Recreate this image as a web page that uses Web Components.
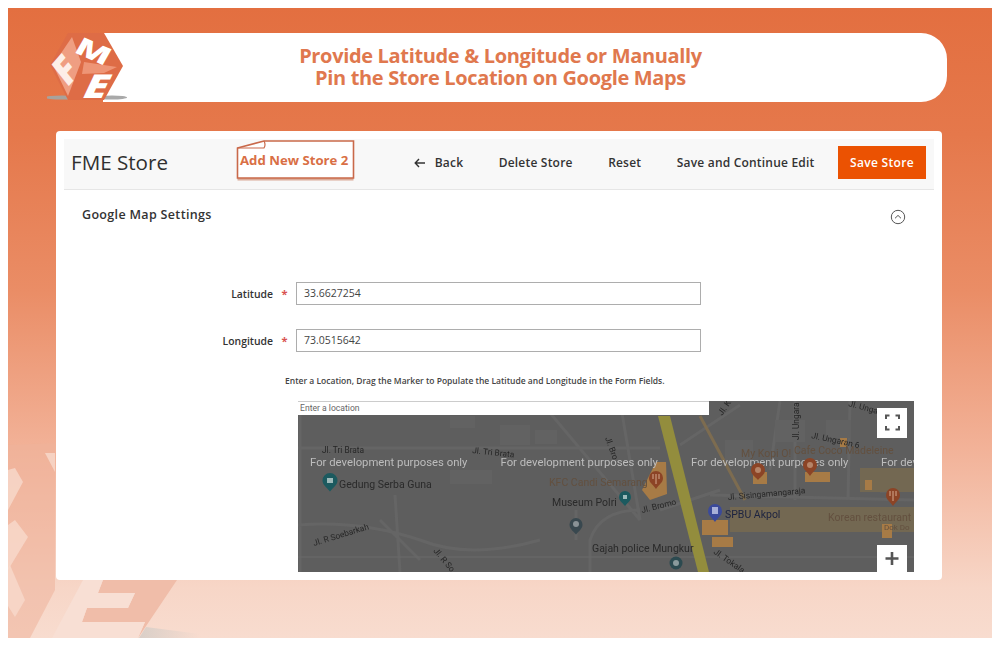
<!DOCTYPE html>
<html lang="en">
<head>
<meta charset="UTF-8">
<title>FME Store Locator</title>
<style>
    body { margin: 8px; background: #fff; font-family: "Open Sans", sans-serif; }
</style>
</head>
<body>
<template id="tmpl-slide">
    <style>
        :host { display: block; position: relative; width: 984px; height: 630px; overflow: hidden;
            background: linear-gradient(180deg, #e36f40 0%, #e5784b 20%, #ea8d66 45%, #f2b298 70%, #f7d6c7 92%, #f8dccf 100%); }
        #mark { position: absolute; left: 0; top: 0; }
        #content { position: relative; display: flex; flex-direction: column; padding-top: 25px; }
    </style>
    <svg id="mark" width="984" height="630" viewBox="8 8 984 630">
        <defs>
            <linearGradient id="shade" x1="0" x2="1" y1="0" y2="0"><stop offset="0" stop-color="#d9cfc8"/><stop offset="1" stop-color="#d9cfc8" stop-opacity="0"/></linearGradient>
        </defs>
        <polygon points="8,445 55,443 55,590 30,638 8,638" fill="#efb29a" opacity=".55"/>
        <polygon points="8,470 15,468 23,482 8,510" fill="#f8d9cc" opacity=".8"/>
        <polygon points="8,525 15,520 28,537 8,570" fill="#f8d9cc" opacity=".8"/>
        <polygon points="8,568 10,565 25,600 15,617 8,606" fill="#f8d9cc" opacity=".8"/>
        <polygon points="45,453 55,453 55,472" fill="#f8d9cc" opacity=".8"/>
        <polygon points="103,580 177,580 138,638 145,622 82,622 87,608 128,608 135,593 98,593" fill="#f0bda9"/>
        <polygon points="83,580 103,580 98,593 135,593 128,608 87,608 82,622 145,622 138,638 52,638" fill="#f8dfd4"/>
        <polygon points="146,627 200,634 200,638 139,638" fill="url(#shade)"/>
    </svg>
    <div id="content"><slot></slot></div>
</template>

<template id="tmpl-banner">
    <style>
        :host { display: block; position: relative; height: 69px; margin: 0 45px 29px 95px; background: #fff; border-radius: 0 26px 26px 0; }
        #logo { position: absolute; left: -56px; top: -2px; }
        #title { display: flex; flex-direction: column; align-items: center; padding: 12px 49px 0 0;
            font: 700 20px/22px "Open Sans", sans-serif; letter-spacing: -.34px; color: #e0784e; white-space: nowrap; }
    </style>
    <svg id="logo" width="85" height="74" viewBox="47 31 85 74">
        <ellipse cx="62" cy="97.500" rx="17" ry="2" fill="#a8a29c"/>
        <ellipse cx="112" cy="97.500" rx="15" ry="2" fill="#a9a9a9"/>
        <polygon points="68,33 104,33 123,66 104,100 68,100 50,65" fill="#de6c46"/>
        <polygon points="72,37 81,62 68,96 53,65" fill="#ef9e82"/>
        <polygon points="84,62 117,67 104,73 82,74" fill="#ee9576"/>
        <text transform="matrix(.8 -.9 .8 1 67 88)" font-family="Open Sans" font-weight="800" font-size="30" fill="#fdeee7">F</text>
        <text transform="matrix(1.15 .5 -.43 .75 73 52)" font-family="Open Sans" font-weight="800" font-size="29" fill="#fff">M</text>
        <text transform="matrix(1.3 0 -.47 1 80 98)" font-family="Open Sans" font-weight="800" font-size="33" fill="#fff">E</text>
    </svg>
    <div id="title"><slot></slot></div>
</template>

<template id="tmpl-card">
    <style>
        :host { display: flex; flex-direction: column; height: 433px; margin: 0 50px 0 48px; padding: 8px; background: #fff; border-radius: 4px; }
    </style>
    <slot></slot>
</template>

<template id="tmpl-toolbar">
    <style>
        :host { display: flex; align-items: center; height: 50px; padding: 0 8px 0 7px; background: #f8f8f8; border-bottom: 1px solid #e6e6e6; color: #303030; flex: none; }
        #name { font: 400 20.6px/26px "Open Sans", sans-serif; width: 165px; margin-top: -5px; }
        #actions { display: flex; align-items: center; gap: 35.5px; margin-left: auto; margin-top: -3px; }
    </style>
    <div id="name"><slot name="title"></slot></div>
    <slot name="note"></slot>
    <div id="actions"><slot></slot></div>
</template>

<template id="tmpl-note">
    <style>
        :host { display: block; position: relative; width: 119px; height: 43px; margin-top: -7px; }
        svg { position: absolute; left: 0; top: 0; }
        span { position: absolute; left: 4px; top: 12px; font: 700 13.2px/18px "Open Sans", sans-serif; color: #d96f45; white-space: nowrap; }
    </style>
    <svg width="119" height="43" viewBox="235 139 119 43">
        <polygon points="236.500,149 264,141 352.500,141 352.500,179 236.500,179" fill="#c97a5c" transform="translate(0 1.5)" opacity=".6"/>
        <path d="M236.500 148 L263 141 L352.500 141 L352.500 178 L236.500 178 Z" fill="#fff" stroke="#c9694a" stroke-width="1.6"/>
        <path d="M236.500 148 L263 148 Q265 145 263 141" fill="none" stroke="#c9694a" stroke-width="1.2"/>
    </svg>
    <span><slot></slot></span>
</template>

<template id="tmpl-action">
    <style>
        :host { display: inline-flex; align-items: center; gap: 10px; font: 600 12px/16px "Open Sans", sans-serif; letter-spacing: .2px; color: #333; white-space: nowrap; }
        :host([primary]) { box-sizing: border-box; width: 88px; height: 33px; justify-content: center; background: #eb5202; color: #fff; margin-left: -12px; font-weight: 600; letter-spacing: .3px; }
        svg { display: none; }
        :host([back]) svg { display: block; }
    </style>
    <svg width="11" height="10" viewBox="0 0 11 10"><path d="M11 5H1.5M5 1 1.2 5 5 9" fill="none" stroke="#333" stroke-width="1.4"/></svg>
    <span><slot></slot></span>
</template>

<template id="tmpl-section">
    <style>
        :host { display: flex; align-items: center; justify-content: space-between; padding: 11px 28px 0 18px; height: 30px; font: 600 12.5px/18px "Open Sans", sans-serif; letter-spacing: .33px; color: #333; flex: none; }
        div { margin-top: -3px; }
        svg { margin-top: 1px; }
    </style>
    <div><slot></slot></div>
    <svg width="16" height="16" viewBox="0 0 16 16"><circle cx="8" cy="8" r="6.7" fill="none" stroke="#555" stroke-width="1"/><path d="M5 9.300 8 6.400l3 2.900" fill="none" stroke="#555" stroke-width="1"/></svg>
</template>

<template id="tmpl-field">
    <style>
        :host { display: grid; grid-template-columns: 209px 23px 405px; align-items: center; height: 23px; margin-bottom: 24px; font: 600 10.4px/14px "Open Sans", sans-serif; color: #333; flex: none; }
        label { text-align: right; }
        i { font: 700 11px/14px "Open Sans", sans-serif; color: #d9534f; text-align: center; }
        #box { box-sizing: border-box; height: 23px; padding: 0 7px; border: 1px solid #adadad; background: #fff; font: 400 10.5px/20px "Open Sans", sans-serif; color: #444; }
    </style>
    <label><slot name="label"></slot></label><i>*</i>
    <div id="box"><slot></slot></div>
</template>

<template id="tmpl-map">
    <style>
        :host { display: block; position: relative; width: 616px; height: 171px; margin-left: 234px; flex: none; overflow: hidden; }
        svg { display: block; filter: blur(.45px); }
        text { font-family: Roboto, sans-serif; }
        .st { font-size: 8.4px; fill: #262626; }
        .pl { font-size: 10.5px; fill: #2a2a2a; }
        .or { font-size: 10.5px; fill: #63503f; }
        .wm { font-size: 11.3px; fill: #bdbdbd; }
    </style>
    <svg width="616" height="171" viewBox="298 401 616 171">
        <rect x="298" y="401" width="616" height="171" fill="#5e5e5e"/>
        <g fill="none" stroke="#656565" stroke-width="3">
            <path d="M298 448H660M300 401V572M380 520 L420 560M395 495 L400 572M298 525 Q360 520 420 540 Q470 560 540 540"/>
            <path d="M540 401 L640 520M620 401 L640 520M576 540V510M640 510 Q600 510 590 540 L590 572"/>
            <path d="M780 401 L770 470M795 401V500M850 401 L848 500M710 495 L914 500M660 510 L720 490M680 445 L740 405"/>
        </g>
        <path d="M298 557H914" stroke="#6a6a6a" stroke-width="1"/>
        <path d="M700 416 L745 500" stroke="#7d6c50" stroke-width="3" fill="none"/>
        <g fill="#626262">
            <rect x="450" y="416" width="25" height="12"/><rect x="500" y="425" width="30" height="20"/><rect x="535" y="430" width="22" height="14"/>
            <rect x="450" y="470" width="42" height="14"/><rect x="725" y="440" width="28" height="22"/><rect x="775" y="420" width="30" height="22"/>
            <rect x="826" y="420" width="25" height="18"/><rect x="880" y="478" width="12" height="15"/>
        </g>
        <g fill="#736852">
            <rect x="730" y="507" width="184" height="25"/><rect x="860" y="468" width="54" height="24"/>
        </g>
        <g fill="#a77b46">
            <polygon points="656,462 666,462 667,494 650,500 642,490"/>
            <rect x="702" y="520" width="26" height="15"/><rect x="712" y="537" width="21" height="10"/>
            <rect x="753" y="472" width="14" height="12"/><rect x="805" y="472" width="25" height="10"/>
            <rect x="865" y="480" width="7" height="10"/><rect x="840" y="438" width="7" height="9"/>
            <rect x="882" y="524" width="10" height="14"/>
        </g>
        <polygon points="658,416 670,416 709,572 698,572" fill="#938d3d"/>

        <text class="st" x="322" y="453">Jl. Tri Brata</text>
        <text class="st" transform="translate(472 453) rotate(6)">Jl. Tri Brata</text>
        <text class="st" transform="translate(314 546) rotate(-17)">Jl. R Soebarkah</text>
        <text class="st" transform="translate(433 551) rotate(50)">Jl. R So</text>
        <text class="st" transform="translate(605 438) rotate(70)">Jl. Bro</text>
        <text class="st" transform="translate(722 416) rotate(-55)">Jl. K</text>
        <text class="st" transform="translate(799 440) rotate(-90)">Jl. Ungara</text>
        <text class="st" transform="translate(848 406) rotate(15)">Jl. Ungar</text>
        <text class="st" transform="translate(811 438) rotate(12)">Jl. Ungaran 6</text>
        <text class="st" transform="translate(728 500) rotate(-5)">Jl. Sisingamangaraja</text>
        <text class="st" transform="translate(642 513) rotate(-14)">Jl. Bromo</text>
        <text class="st" transform="translate(713 553) rotate(35)">Jl. Tokala</text>

        <text class="pl" x="339" y="488">Gedung Serba Guna</text>
        <text class="or" x="549" y="486">KFC Candi Semarang</text>
        <text class="pl" x="552" y="506">Museum Polri</text>
        <text class="pl" x="592" y="552">Gajah police Mungkur</text>
        <text class="or" x="741" y="457">My Kopi O!</text>
        <text class="or" x="794" y="454">Cafe Coco Madeleine</text>
        <text class="pl" x="725" y="518" style="fill:#1c2340">SPBU Akpol</text>
        <text class="or" x="828" y="521">Korean restaurant</text>
        <text class="or" x="884" y="530" style="font-size:8px">Dok Do</text>

        <text class="wm" x="310" y="466">For development purposes only</text>
        <text class="wm" x="500.500" y="466">For development purposes only</text>
        <text class="wm" x="691" y="466">For development purposes only</text>
        <text class="wm" x="881" y="466">For development purposes only</text>

        <g id="pins">
            <path d="M330 473a7.500 7.500 0 0 1 7.500 7.500c0 4.500-4 6.500-7.500 11-3.500-4.500-7.500-6.500-7.500-11a7.500 7.500 0 0 1 7.500-7.500z" fill="#1c5a5f"/><rect x="327" y="478" width="6" height="5" fill="#9db9b9"/>
            <path d="M625 491a6 6 0 0 1 6 6c0 4-3 5-6 9-3-4-6-5-6-9a6 6 0 0 1 6-6z" fill="#1c5a5f"/><rect x="623" y="495" width="4" height="4" fill="#9db9b9"/>
            <path d="M576 518a6.500 6.500 0 0 1 6.500 6.500c0 4-3 6-6.500 10-3.500-4-6.500-6-6.500-10a6.500 6.500 0 0 1 6.500-6.500z" fill="#39484f"/><circle cx="576" cy="524" r="3" fill="#8a9296"/>
            <path d="M656 471a7 7 0 0 1 7 7c0 4.500-3.500 6-7 11-3.500-5-7-6.500-7-11a7 7 0 0 1 7-7z" fill="#8c4426"/><path d="M653 474v5M656 474v10M659 474v5" stroke="#d5a98f" stroke-width="1"/>
            <path d="M758 463a7 7 0 0 1 7 7c0 4.500-3.500 6-7 10-3.500-4-7-5.500-7-10a7 7 0 0 1 7-7z" fill="#8c4426"/><circle cx="758" cy="470" r="3" fill="#b58468"/>
            <path d="M810 458a7 7 0 0 1 7 7c0 4.500-3.500 6-7 11-3.500-5-7-6.500-7-11a7 7 0 0 1 7-7z" fill="#8c4426"/><circle cx="810" cy="465" r="3" fill="#b58468"/>
            <path d="M893 488a7 7 0 0 1 7 7c0 4.500-3.500 6-7 11-3.500-5-7-6.500-7-11a7 7 0 0 1 7-7z" fill="#8c4426"/><path d="M890 491v5M893 491v10M896 491v5" stroke="#d5a98f" stroke-width="1"/>
            <path d="M715 504a7 7 0 0 1 7 7c0 4.500-3.500 6-7 11-3.500-5-7-6.500-7-11a7 7 0 0 1 7-7z" fill="#3b4a9a"/><rect x="712" y="507" width="6" height="7" fill="#a8b0d8"/>
            <circle cx="676" cy="563" r="6.500" fill="#2c4a50"/><circle cx="676" cy="563" r="3" fill="#8a9a9c"/>
        </g>

        <rect x="877" y="408" width="30" height="30" fill="#fff"/>
        <path d="M886 419v-3.500h3.500M895.500 415.500h3.500v3.500M899 426v3.500h-3.500M889.500 429.500H886V426" fill="none" stroke="#555" stroke-width="2"/>
        <rect x="877" y="545" width="30" height="27" fill="#fff"/>
        <path d="M892 552v13M885.500 558.500h13" stroke="#555" stroke-width="2.600"/>
    </svg>
    <input-strip><slot></slot></input-strip>
</template>

<template id="tmpl-strip">
    <style>
        :host { display: block; position: absolute; left: 0; top: 0; box-sizing: border-box; width: 411px; height: 14px; padding: 0 2px; background: #fff; border-top: 1px solid #ccc; font: 400 8.6px/13px Roboto, sans-serif; color: #666; }
    </style>
    <slot></slot>
</template>

<template id="tmpl-hint">
    <style>
        :host { display: block; margin: -2px 0 13px 221px; height: 14px; font: 600 8.5px/14px "Open Sans", sans-serif; color: #444; white-space: nowrap; flex: none; }
    </style>
    <slot></slot>
</template>

<fme-slide>
    <fme-banner>
        <span>Provide Latitude &amp; Longitude or Manually</span>
        <span>Pin the Store Location on Google Maps</span>
    </fme-banner>
    <store-card>
        <store-toolbar>
            <span slot="title">FME Store</span>
            <store-note slot="note">Add New Store 2</store-note>
            <store-action back>Back</store-action>
            <store-action>Delete Store</store-action>
            <store-action>Reset</store-action>
            <store-action>Save and Continue Edit</store-action>
            <store-action primary>Save Store</store-action>
        </store-toolbar>
        <map-section>Google Map Settings</map-section>
        <div style="height:51px;flex:none"></div>
        <form-field><span slot="label">Latitude</span>33.6627254</form-field>
        <form-field><span slot="label">Longitude</span>73.0515642</form-field>
        <form-hint>Enter a Location, Drag the Marker to Populate the Latitude and Longitude in the Form Fields.</form-hint>
        <map-panel>Enter a location</map-panel>
    </store-card>
</fme-slide>

<script>
    // every element just clones its template into an open shadow root
    const parts = {
        "fme-slide": "tmpl-slide",
        "fme-banner": "tmpl-banner",
        "store-card": "tmpl-card",
        "store-toolbar": "tmpl-toolbar",
        "store-note": "tmpl-note",
        "store-action": "tmpl-action",
        "map-section": "tmpl-section",
        "form-field": "tmpl-field",
        "form-hint": "tmpl-hint",
        "map-panel": "tmpl-map",
        "input-strip": "tmpl-strip"
    }

    for (const name in parts) {
        customElements.define(name, class extends HTMLElement {
            connectedCallback() {
                if (this.shadowRoot) return
                const shadow = this.attachShadow({mode: 'open'})
                shadow.append(document.getElementById(parts[name]).content.cloneNode(true))
            }
        })
    }
</script>
</body>
</html>
